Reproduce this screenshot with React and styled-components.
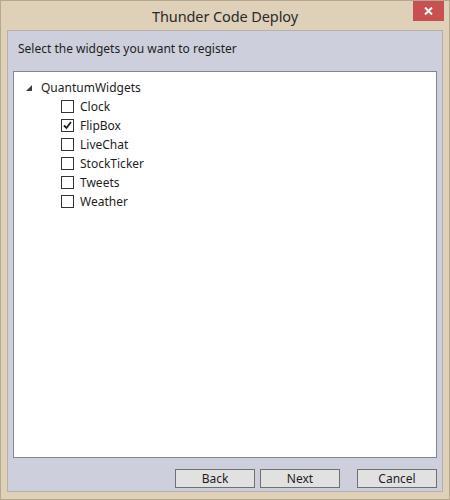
import React from "react";
import styled, { createGlobalStyle } from "styled-components";

const widgets = [
  { name: "Clock", checked: false },
  { name: "FlipBox", checked: true },
  { name: "LiveChat", checked: false },
  { name: "StockTicker", checked: false },
  { name: "Tweets", checked: false },
  { name: "Weather", checked: false },
];

export default function App() {
  return (
    <>
      <GlobalStyle />
      <Window>
        <TitleBar>
          <span />
          <Title>Thunder Code Deploy</Title>
          <CloseButton>
            <svg width="9" height="8" viewBox="0 0 9 8">
              <path d="M1 0.5 L8 7.5 M8 0.5 L1 7.5" stroke="#fff" strokeWidth="2" />
            </svg>
          </CloseButton>
        </TitleBar>
        <Client>
          <Instruction>Select the widgets you want to register</Instruction>
          <TreeBox>
            <TreeRow>
              <Expander>
                <svg width="6" height="6" viewBox="0 0 6 6">
                  <polygon points="0,6 6,6 6,0" fill="#404040" />
                </svg>
              </Expander>
              <Label>QuantumWidgets</Label>
            </TreeRow>
            {widgets.map((w) => (
              <TreeRow key={w.name} $child>
                <CheckBox>
                  {w.checked && (
                    <svg width="11" height="11" viewBox="0 0 11 11">
                      <path
                        d="M2 5.5 L4.5 8 L9 2"
                        fill="none"
                        stroke="#1e1e1e"
                        strokeWidth="1.8"
                      />
                    </svg>
                  )}
                </CheckBox>
                <Label>{w.name}</Label>
              </TreeRow>
            ))}
          </TreeBox>
          <ButtonRow>
            <Button>Back</Button>
            <Button>Next</Button>
            <Button $gap>Cancel</Button>
          </ButtonRow>
        </Client>
      </Window>
    </>
  );
}

const GlobalStyle = createGlobalStyle`
  body {
    margin: 0;
    font-family: "Noto Sans", "Open Sans", sans-serif;
  }
`;

const Window = styled.div`
  box-sizing: border-box;
  width: 450px;
  height: 500px;
  background: #dfd0ba;
  border: 1px solid #b8a78f;
  display: flex;
  flex-direction: column;
`;

const TitleBar = styled.div`
  height: 29px;
  display: grid;
  grid-template-columns: 1fr auto 1fr;
  align-items: start;
`;

const Title = styled.div`
  font-size: 14.5px;
  color: #2b2b2b;
  line-height: 20px;
  margin-top: 5px;
  letter-spacing: -0.1px;
`;

const CloseButton = styled.div`
  justify-self: end;
  margin-right: 5px;
  width: 31px;
  height: 20px;
  background: #c75050;
  display: flex;
  align-items: center;
  justify-content: center;
`;

const Client = styled.div`
  flex: 1;
  margin: 0 6px 7px;
  background: #cdcfdc;
  border: 1px solid #b6b0a6;
  display: flex;
  flex-direction: column;
  padding: 0 5px 3px;
`;

const Instruction = styled.div`
  font-size: 12px;
  color: #1e1e1e;
  line-height: 16px;
  margin: 10px 0 0 5px;
  height: 30px;
`;

const TreeBox = styled.div`
  flex: 1;
  background: #fff;
  border: 1px solid #828790;
  padding: 6px 0 0 12px;
`;

const TreeRow = styled.div`
  height: 19px;
  display: flex;
  align-items: center;
  padding-left: ${(p) => (p.$child ? "35px" : "0")};
`;

const Expander = styled.span`
  width: 15px;
  display: flex;
  align-items: center;
  margin-top: 1px;
`;

const Label = styled.span`
  font-size: 12px;
  color: #1e1e1e;
  line-height: 16px;
`;

const CheckBox = styled.span`
  box-sizing: border-box;
  width: 13px;
  height: 13px;
  border: 1px solid #333;
  background: #fff;
  margin-right: 6px;
  display: flex;
  align-items: center;
  justify-content: center;
`;

const ButtonRow = styled.div`
  display: flex;
  justify-content: flex-end;
  gap: 5px;
  margin-top: 11px;
`;

const Button = styled.div`
  box-sizing: border-box;
  width: 80px;
  height: 19px;
  border: 1px solid #707070;
  background: #e1e1e1;
  font-size: 12px;
  color: #1e1e1e;
  display: flex;
  align-items: center;
  justify-content: center;
  margin-left: ${(p) => (p.$gap ? "12px" : "0")};
`;
